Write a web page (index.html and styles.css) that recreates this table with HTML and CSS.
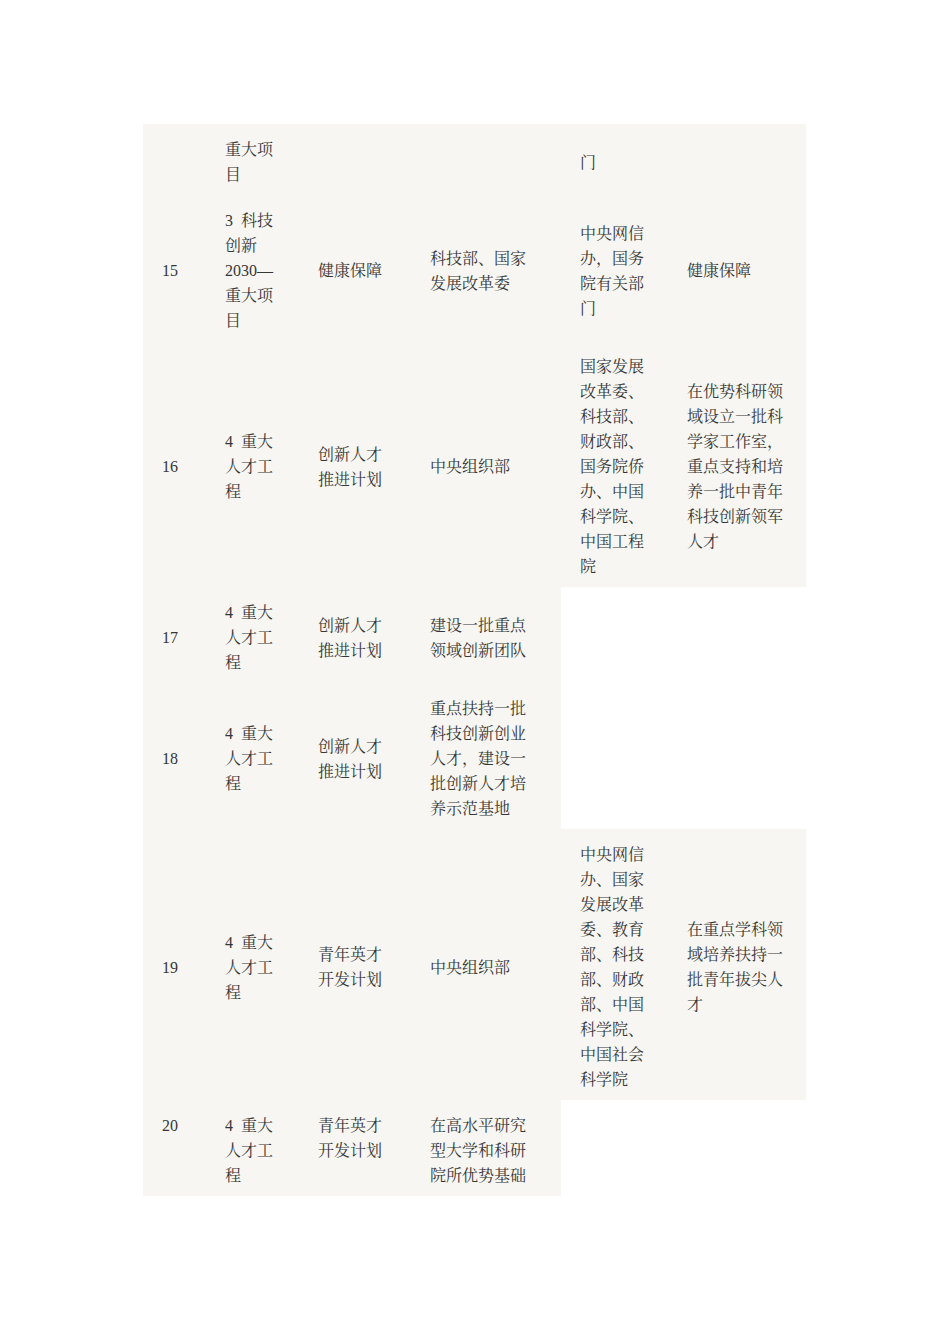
FILE: index.html
```html
<!DOCTYPE html>
<html lang="zh-CN">
<head>
<meta charset="utf-8">
<title>重大项目表</title>
<link rel="stylesheet" href="styles.css">
</head>
<body>
<div class="page">
<table class="plan">
<colgroup>
<col class="c1"><col class="c2"><col class="c3"><col class="c4"><col class="c5"><col class="c6">
</colgroup>
<tbody>
<tr>
<td></td><td>重大项目</td><td></td><td></td><td>门</td><td></td>
</tr>
<tr>
<td>15</td><td>3 科技创新2030—重大项目</td><td>健康保障</td><td>科技部、国家发展改革委</td><td>中央网信办，国务院有关部门</td><td>健康保障</td>
</tr>
<tr>
<td>16</td><td>4 重大人才工程</td><td>创新人才推进计划</td><td>中央组织部</td><td>国家发展改革委、科技部、财政部、国务院侨办、中国科学院、中国工程院</td><td>在优势科研领域设立一批科学家工作室，重点支持和培养一批中青年科技创新领军人才</td>
</tr>
<tr>
<td>17</td><td>4 重大人才工程</td><td>创新人才推进计划</td><td>建设一批重点领域创新团队</td>
</tr>
<tr>
<td>18</td><td>4 重大人才工程</td><td>创新人才推进计划</td><td>重点扶持一批科技创新创业人才，建设一批创新人才培养示范基地</td>
</tr>
<tr>
<td>19</td><td>4 重大人才工程</td><td>青年英才开发计划</td><td>中央组织部</td><td>中央网信办、国家发展改革委、教育部、科技部、财政部、中国科学院、中国社会科学院</td><td>在重点学科领域培养扶持一批青年拔尖人才</td>
</tr>
<tr class="cut">
<td>20</td><td>4 重大人才工程</td><td>青年英才开发计划</td><td>在高水平研究型大学和科研院所优势基础</td>
</tr>
</tbody>
</table>
</div>
</body>
</html>
```
FILE: styles.css
```css
html, body {
  margin: 0;
  padding: 0;
  background: #ffffff;
}
.page {
  width: 663px;
  margin: 124px 0 0 143px;
}
.plan {
  width: 663px;
  table-layout: fixed;
  border-collapse: collapse;
  border-spacing: 0;
  font-family: "Liberation Serif", "Noto Serif CJK SC", "Noto Sans CJK SC", serif;
  font-size: 16px;
  line-height: 25px;
  color: #363636;
  word-spacing: 4px;
}
.c1 { width: 63px; }
.c2 { width: 93px; }
.c3 { width: 112px; }
.c4 { width: 150px; }
.c5 { width: 107px; }
.c6 { width: 138px; }
.plan td {
  background: #f7f6f3;
  padding: 13px 21px 8px 19px;
  vertical-align: middle;
  text-align: left;
  word-break: normal;
}
.plan tr.cut td {
  vertical-align: top;
}
```
